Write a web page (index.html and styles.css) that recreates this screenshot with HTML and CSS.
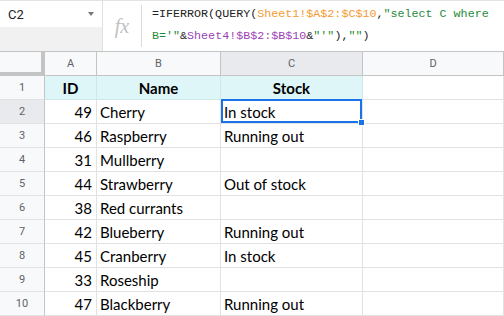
FILE: index.html
```html
<!DOCTYPE html>
<html lang="en">
<head>
    <meta charset="UTF-8">
    <title>Stock lookup</title>
    <link rel="stylesheet" href="styles.css">
</head>
<body>
    <!-- Formula bar -->
    <div class="formula-bar">
        <div class="name-box">
            <div class="name-top">
                <span class="cell-ref">C2</span>
                <span class="caret"></span>
            </div>
            <div class="name-bottom"></div>
        </div>
        <div class="fx">fx</div>
        <div class="formula">
            <div class="line">=IFERROR(QUERY(<span class="r1">Sheet1!$A$2:$C$10</span>,<span class="str">"select C where</span></div>
            <div class="line"><span class="str">B='"</span>&amp;<span class="r2">Sheet4!$B$2:$B$10</span>&amp;<span class="str">"'"</span>),<span class="str">""</span>)</div>
        </div>
    </div>

    <!-- Grid -->
    <div class="sheet">
        <div class="corner"></div>
        <div class="col-head">A</div>
        <div class="col-head">B</div>
        <div class="col-head active">C</div>
        <div class="col-head">D</div>

        <div class="row-head">1</div>
        <div class="cell title center">ID</div>
        <div class="cell title center">Name</div>
        <div class="cell title center">Stock</div>
        <div class="cell"></div>

        <div class="row-head active">2</div>
        <div class="cell num">49</div>
        <div class="cell">Cherry</div>
        <div class="cell selected">In stock</div>
        <div class="cell"></div>

        <div class="row-head">3</div>
        <div class="cell num">46</div>
        <div class="cell">Raspberry</div>
        <div class="cell">Running out</div>
        <div class="cell"></div>

        <div class="row-head">4</div>
        <div class="cell num">31</div>
        <div class="cell">Mullberry</div>
        <div class="cell"></div>
        <div class="cell"></div>

        <div class="row-head">5</div>
        <div class="cell num">44</div>
        <div class="cell">Strawberry</div>
        <div class="cell">Out of stock</div>
        <div class="cell"></div>

        <div class="row-head">6</div>
        <div class="cell num">38</div>
        <div class="cell">Red currants</div>
        <div class="cell"></div>
        <div class="cell"></div>

        <div class="row-head">7</div>
        <div class="cell num">42</div>
        <div class="cell">Blueberry</div>
        <div class="cell">Running out</div>
        <div class="cell"></div>

        <div class="row-head">8</div>
        <div class="cell num">45</div>
        <div class="cell">Cranberry</div>
        <div class="cell">In stock</div>
        <div class="cell"></div>

        <div class="row-head">9</div>
        <div class="cell num">33</div>
        <div class="cell">Roseship</div>
        <div class="cell"></div>
        <div class="cell"></div>

        <div class="row-head">10</div>
        <div class="cell num">47</div>
        <div class="cell">Blackberry</div>
        <div class="cell">Running out</div>
        <div class="cell"></div>
    </div>
</body>
</html>
```

FILE: styles.css
```css
body {
    margin: 0;
    width: 504px;
    height: 316px;
    overflow: hidden;
    background-color: #fff;
    font-family: Roboto, Arial, sans-serif;
}

/* Formula bar */
.formula-bar {
    display: flex;
    height: 52px;
    box-sizing: border-box;
    border-top: 1px solid #e3e3e3;
    border-bottom: 1px solid #c4c4c4;
}

.name-box {
    width: 103px;
    display: flex;
    flex-direction: column;
    border-right: 1px solid #e0e0e0;
    box-sizing: border-box;
}

.name-top {
    height: 26px;
    display: flex;
    align-items: center;
    justify-content: space-between;
    padding: 0 8px 0 8px;
    box-sizing: border-box;
}

.cell-ref {
    font-size: 13px;
    color: #222;
}

.caret {
    width: 0;
    height: 0;
    border-left: 3px solid transparent;
    border-right: 3px solid transparent;
    border-top: 4px solid #777;
}

.name-bottom {
    flex: 1;
    background-color: #f1f1f1;
}

.fx {
    width: 39px;
    margin: 4px 0;
    border-right: 1px solid #dadada;
    box-sizing: border-box;
    display: flex;
    align-items: center;
    justify-content: center;
    font-family: "Liberation Serif", serif;
    font-style: italic;
    font-size: 20px;
    color: #c0c0c0;
}

.formula {
    padding: 2px 0 0 10px;
    font-family: "Liberation Mono", monospace;
    font-size: 11.7px;
    color: #222;
}

.formula .line {
    height: 22px;
    line-height: 22px;
    white-space: pre;
}

.r1 { color: #f59a2f; }
.r2 { color: #9c3fb5; }
.str { color: #1f8a3a; }

/* Grid */
.sheet {
    display: grid;
    grid-template-columns: 45px 52px 124px 142px 141px;
    grid-auto-rows: 24px;
}

.sheet > div {
    box-sizing: border-box;
    border-right: 1px solid #e2e2e2;
    border-bottom: 1px solid #e2e2e2;
}

.corner {
    background-color: #f8f9fa;
    border-right: 4px solid #c4c4c4 !important;
    border-bottom: 4px solid #c4c4c4 !important;
}

.col-head {
    background-color: #f8f9fa;
    border-right-color: #c4c4c4 !important;
    border-bottom-color: #c4c4c4 !important;
    display: flex;
    align-items: center;
    justify-content: center;
    font-size: 11px;
    color: #5f6368;
}

.row-head {
    background-color: #f8f9fa;
    border-right-color: #c4c4c4 !important;
    display: flex;
    align-items: center;
    justify-content: center;
    font-size: 11px;
    color: #5f6368;
}

.col-head.active,
.row-head.active {
    background-color: #e8eaed;
}

.cell {
    display: flex;
    align-items: center;
    padding: 0 3px;
    font-family: Lato, "Open Sans", sans-serif;
    font-size: 15px;
    color: #000;
    white-space: nowrap;
}

.cell.num {
    justify-content: flex-end;
    padding-right: 4px;
}

.cell.center {
    justify-content: center;
}

.cell.title {
    background-color: #dff6f8;
    border-right-color: #cde8eb;
    border-bottom-color: #cde8eb;
    font-weight: bold;
}

/* Active cell outline and fill handle */
.cell.selected {
    position: relative;
}

.cell.selected::before {
    content: "";
    position: absolute;
    top: -1px;
    left: 0;
    right: 0;
    bottom: 0;
    border: 2px solid #1a73e8;
}

.cell.selected::after {
    content: "";
    position: absolute;
    right: -3px;
    bottom: -3px;
    width: 5px;
    height: 5px;
    background-color: #1a73e8;
    border: 1px solid #fff;
}
```
